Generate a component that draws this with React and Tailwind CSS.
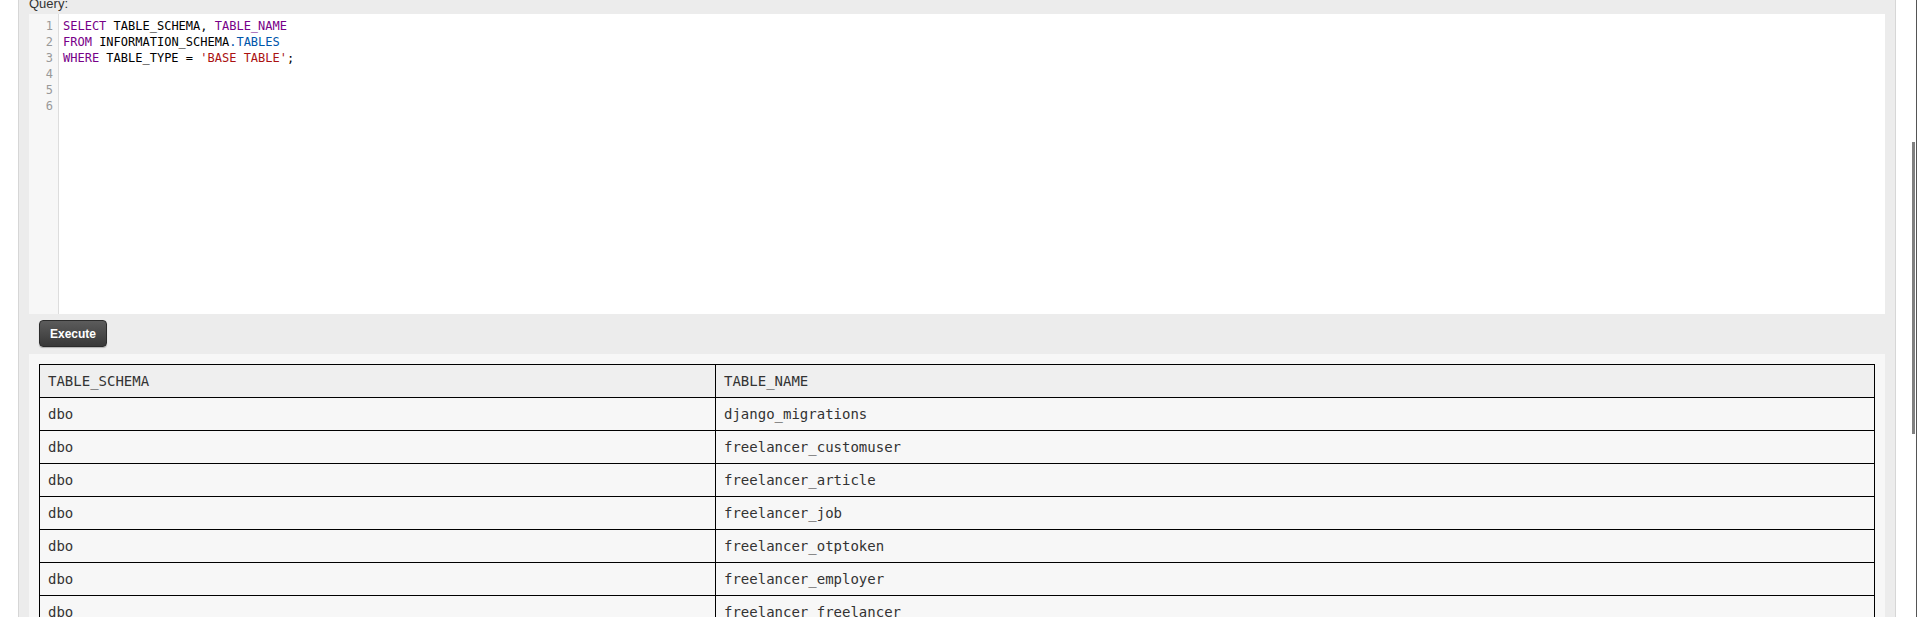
export default function App() {
  const rows = [
    "django_migrations",
    "freelancer_customuser",
    "freelancer_article",
    "freelancer_job",
    "freelancer_otptoken",
    "freelancer_employer",
    "freelancer_freelancer",
    "freelancer_proposal",
  ];
  const mono = { fontFamily: '"DejaVu Sans Mono", "Liberation Mono", monospace' };
  return (
    <div
      className="w-[1917px] h-[617px] overflow-hidden flex bg-white"
      style={{ fontFamily: '"Liberation Sans", Arial, sans-serif' }}
    >
      <div className="w-[18px] shrink-0 bg-white" />
      <div className="w-[1878px] shrink-0 bg-[#ececec] border-l border-r border-[#d6d6d6] px-[10px]">
        <div className="-mt-[3px] mb-[3px] h-[14px] leading-[14px] text-[13px] text-[#333]">Query:</div>
        <div className="h-[300px] bg-white flex text-[12px] leading-[16px]" style={mono}>
          <div className="w-[30px] shrink-0 bg-[#f7f7f7] border-r border-[#dddddd] pt-[4px] pr-[5px] text-right text-[#999]">
            {[1, 2, 3, 4, 5, 6].map((n) => (
              <div key={n} className="h-[16px]">{n}</div>
            ))}
          </div>
          <div className="pl-[4px] pt-[4px] text-black whitespace-pre">
            <div className="h-[16px]">
              <span className="text-[#770088]">SELECT</span> TABLE_SCHEMA, <span className="text-[#770088]">TABLE_NAME</span>
            </div>
            <div className="h-[16px]">
              <span className="text-[#770088]">FROM</span> INFORMATION_SCHEMA<span className="text-[#0055aa]">.TABLES</span>
            </div>
            <div className="h-[16px]">
              <span className="text-[#770088]">WHERE</span> TABLE_TYPE = <span className="text-[#aa1111]">'BASE TABLE'</span>;
            </div>
            <div className="h-[16px]"> </div>
            <div className="h-[16px]"> </div>
            <div className="h-[16px]"> </div>
          </div>
        </div>
        <div className="h-[40px] pt-[6px] pl-[10px]">
          <button className="h-[27px] w-[68px] rounded-[4px] border border-[#2b2b2b] bg-gradient-to-b from-[#5c5c5c] to-[#383838] text-white font-bold text-[12px] shadow-[0_1px_1px_rgba(0,0,0,0.25)]">
            Execute
          </button>
        </div>
        <div className="bg-[#f7f7f7] p-[10px] text-[14px] text-[#333]" style={mono}>
          <div className="border-l border-t border-black">
            <div className="grid grid-cols-[676px_1fr] bg-[#efefef]">
              <div className="h-[33px] flex items-center px-[8px] border-r border-b border-black">TABLE_SCHEMA</div>
              <div className="h-[33px] flex items-center px-[8px] border-r border-b border-black">TABLE_NAME</div>
            </div>
            {rows.map((r) => (
              <div key={r} className="grid grid-cols-[676px_1fr] bg-[#f7f7f7]">
                <div className="h-[33px] flex items-center px-[8px] border-r border-b border-black">dbo</div>
                <div className="h-[33px] flex items-center px-[8px] border-r border-b border-black">{r}</div>
              </div>
            ))}
          </div>
        </div>
      </div>
      <div className="w-[20px] shrink-0 bg-white pt-[142px]">
        <div className="ml-[16px] w-[3px] h-[292px] bg-[#808080]" />
      </div>
      <div className="w-[1px] shrink-0 bg-[#555]" />
    </div>
  );
}
